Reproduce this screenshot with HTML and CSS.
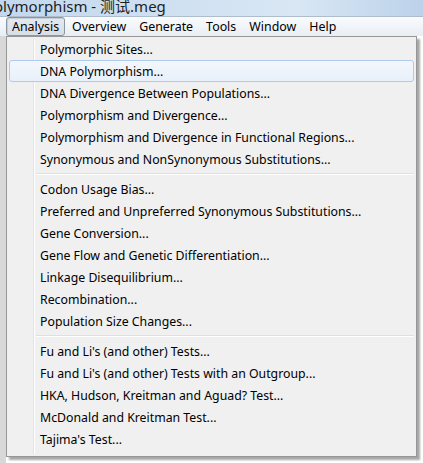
FILE: index.html
```html
<!DOCTYPE html>
<html>
<head>
<meta charset="utf-8">
<link rel="stylesheet" href="styles.css">
</head>
<body>
<div class="window">
  <div class="titlebar"><span class="title">olymorphism - 测试.meg</span></div>
  <div class="menubar">
    <span class="mitem active">Analysis</span>
    <span class="mitem">Overview</span>
    <span class="mitem">Generate</span>
    <span class="mitem">Tools</span>
    <span class="mitem">Window</span>
    <span class="mitem">Help</span>
  </div>
  <div class="content"></div>
  <div class="dropdown">
    <div class="gutter"></div>
    <div class="item">Polymorphic Sites...</div>
    <div class="item hl">DNA Polymorphism...</div>
    <div class="item">DNA Divergence Between Populations...</div>
    <div class="item">Polymorphism and Divergence...</div>
    <div class="item">Polymorphism and Divergence in Functional Regions...</div>
    <div class="item">Synonymous and NonSynonymous Substitutions...</div>
    <div class="sep"></div>
    <div class="item">Codon Usage Bias...</div>
    <div class="item">Preferred and Unpreferred Synonymous Substitutions...</div>
    <div class="item">Gene Conversion...</div>
    <div class="item">Gene Flow and Genetic Differentiation...</div>
    <div class="item">Linkage Disequilibrium...</div>
    <div class="item">Recombination...</div>
    <div class="item">Population Size Changes...</div>
    <div class="sep"></div>
    <div class="item">Fu and Li's (and other) Tests...</div>
    <div class="item">Fu and Li's (and other) Tests with an Outgroup...</div>
    <div class="item">HKA, Hudson, Kreitman and Aguad? Test...</div>
    <div class="item">McDonald and Kreitman Test...</div>
    <div class="item">Tajima's Test...</div>
  </div>
</div>
</body>
</html>
```
FILE: styles.css
```css
html, body {
  margin: 0;
  padding: 0;
  background: #ffffff;
}
.window {
  position: relative;
  width: 423px;
  height: 463px;
  overflow: hidden;
  font-family: "Noto Sans", "Noto Sans CJK SC", sans-serif;
  color: #000;
}
.titlebar {
  height: 16px;
  background: linear-gradient(90deg, #c3d8ee 0%, #cfe0f1 40%, #d9e7f4 70%, #bcd2ea 100%);
  overflow: hidden;
}
.title {
  display: block;
  margin-left: -6px;
  margin-top: -4px;
  font-size: 15px;
  line-height: 20px;
  color: #1e1e1e;
  white-space: nowrap;
}
.menubar {
  height: 20px;
  display: flex;
  align-items: center;
  padding-left: 6px;
  border-top: 1px solid #aebccc;
  background: linear-gradient(#f9fbfd, #e9eef4);
  box-sizing: border-box;
}
.mitem {
  font-size: 12.4px;
  line-height: 17px;
  padding: 0 5px;
  margin-right: 1px;
  border: 1px solid transparent;
  color: #000;
}
.mitem.active {
  border-color: #8a96a4;
  border-radius: 3px;
  background: linear-gradient(#e4e9ef, #d8dee6);
  box-shadow: inset 1px 1px 0 #c6ccd3;
}
.content {
  height: 427px;
  background: #ffffff;
  border-left: 6px solid #d8d8d8;
}
.dropdown {
  position: absolute;
  left: 6px;
  top: 36px;
  width: 405px;
  padding: 1px 2px 6px 2px;
  background: #f0f0f0;
  border: 1px solid #979797;
  box-shadow: 3px 3px 2px rgba(0,0,0,0.35);
}
.gutter {
  position: absolute;
  left: 26px;
  top: 2px;
  bottom: 2px;
  width: 1px;
  background: #e2e3e3;
  border-right: 1px solid #ffffff;
}
.item {
  position: relative;
  height: 22px;
  line-height: 22px;
  padding-left: 30px;
  font-size: 12.3px;
  border: 1px solid transparent;
  border-radius: 3px;
  box-sizing: border-box;
  white-space: nowrap;
}
.item.hl {
  border-color: #aecbec;
  background: linear-gradient(#f3f7fc, #e8f0fa);
}
.sep {
  position: relative;
  height: 8px;
  margin-left: 27px;
}
.sep::before {
  content: "";
  position: absolute;
  left: 0;
  right: 0;
  top: 3px;
  height: 1px;
  background: #e0e0e0;
  border-bottom: 1px solid #ffffff;
}
```
